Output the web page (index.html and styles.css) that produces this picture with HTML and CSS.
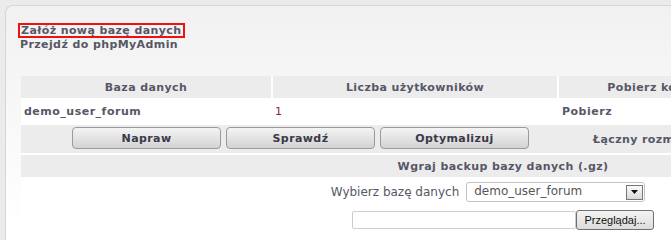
FILE: index.html
```html
<!DOCTYPE html>
<html lang="pl">
<head>
<meta charset="utf-8">
<title>Bazy danych</title>
<link rel="stylesheet" href="styles.css">
</head>
<body>
<div class="panel">
  <div class="links">
    <a class="link link-marked" href="#">Załóż nową bazę danych</a>
    <a class="link" href="#">Przejdź do phpMyAdmin</a>
  </div>

  <div class="db-table">
    <div class="row head">
      <div class="cell c1">Baza danych</div>
      <div class="cell c2">Liczba użytkowników</div>
      <div class="cell c3">Pobierz kopię</div>
      <div class="cell c4">Usuń</div>
    </div>
    <div class="row data">
      <div class="cell c1 name">demo_user_forum</div>
      <div class="cell c2 count">1</div>
      <div class="cell c3 action">Pobierz</div>
      <div class="cell c4"></div>
    </div>
    <div class="row tools">
      <div class="cell buttons">
        <button class="btn">Napraw</button>
        <button class="btn">Sprawdź</button>
        <button class="btn">Optymalizuj</button>
      </div>
      <div class="cell size">Łączny rozmiar baz danych</div>
    </div>
    <div class="row upload-head">
      <div class="cell full">Wgraj backup bazy danych (.gz)</div>
    </div>
    <div class="form-row select-row">
      <span class="label">Wybierz bazę danych</span>
      <div class="select">
        <span class="select-value">demo_user_forum</span>
        <span class="select-arrow"><svg width="7" height="4" viewBox="0 0 7 4"><path d="M0 0h7L3.5 4z" fill="#111"/></svg></span>
      </div>
    </div>
    <div class="form-row file-row">
      <span class="file-box"></span>
      <span class="file-btn">Przeglądaj...</span>
    </div>
  </div>
</div>
</body>
</html>
```

FILE: styles.css
```css
html, body {
  margin: 0;
  height: 100%;
  overflow: hidden;
  background: #ebebeb;
}

body {
  font-family: "DejaVu Sans", Verdana, sans-serif;
  font-size: 11px;
  color: #575766;
}

.panel {
  box-sizing: border-box;
  margin: 5px 0 0 5px;
  width: 1100px;
  height: 400px;
  padding: 17px 0 0 15px;
  border: 1px solid #d6d6d6;
  border-right: 0;
  border-top-left-radius: 8px;
  background: linear-gradient(#f1f1f1, #ffffff 220px);
}

.links {
  display: flex;
  flex-direction: column;
  align-items: flex-start;
}

.link {
  color: #575766;
  font-weight: bold;
  letter-spacing: 0.4px;
  text-decoration: none;
  line-height: 14px;
  margin-left: -1px;
}

.link-marked {
  line-height: 11px;
  border: 2px solid #ee1111;
  padding: 0 1px;
  margin-left: -3px;
}

.db-table {
  width: 964px;
  margin-top: 24px;
  background: #fff;
}

.row {
  display: flex;
  gap: 2px;
}

.cell {
  box-sizing: border-box;
  display: flex;
  align-items: center;
}

.head .cell {
  height: 22px;
  background: #ececec;
  justify-content: center;
  font-weight: bold;
  letter-spacing: 0.4px;
}

.c1 { width: 250px; }
.c2 { width: 284px; }
.c3 { width: 186px; }
.c4 { flex: 1; }

.data .cell {
  height: 27px;
  background: #fff;
  padding-left: 3px;
}

.name, .action {
  font-weight: bold;
  letter-spacing: 0.5px;
}

.count {
  color: #8e2038;
  padding-left: 2px !important;
}

.tools {
  gap: 0;
  background: #ececec;
  height: 28px;
}

.buttons {
  width: 559px;
  justify-content: center;
  gap: 5px;
  padding-bottom: 2px;
}

.btn {
  width: 149px;
  height: 22px;
  border: 1px solid #9a9a9a;
  border-radius: 4px;
  background: linear-gradient(#f4f4f4, #d3d3d3);
  font-family: "DejaVu Sans", Verdana, sans-serif;
  font-size: 11px;
  font-weight: bold;
  letter-spacing: 0.4px;
  color: #3a3a48;
  padding: 0;
}

.size {
  padding-left: 13px;
  font-weight: bold;
  letter-spacing: 0.4px;
}

.upload-head {
  margin-top: 2px;
}

.full {
  flex: 1;
  height: 22px;
  background: #ececec;
  justify-content: center;
  font-weight: bold;
  letter-spacing: 0.4px;
}

.form-row {
  display: flex;
  justify-content: center;
  align-items: center;
}

.select-row {
  margin-top: 5px;
  gap: 7px;
  padding-right: 30px;
  font-size: 12px;
}

.select {
  box-sizing: border-box;
  width: 179px;
  height: 20px;
  border: 1px solid #c3c3c3;
  border-radius: 3px;
  background: #fff;
  display: flex;
  align-items: center;
  justify-content: space-between;
  padding: 0 1px 0 7px;
}

.select-value {
  color: #555;
  margin-top: -3px;
}

.select-arrow {
  box-sizing: border-box;
  width: 17px;
  height: 15px;
  border: 1px solid #777;
  background: linear-gradient(#fafafa, #d9d9d9);
  display: flex;
  align-items: center;
  justify-content: center;
}

.file-row {
  margin-top: 8px;
}

.file-box {
  box-sizing: border-box;
  width: 224px;
  height: 18px;
  border: 1px solid #cdcdcd;
  border-radius: 2px;
  background: #fff;
}

.file-btn {
  box-sizing: border-box;
  width: 78px;
  height: 20px;
  border: 1px solid #707070;
  border-radius: 3px;
  background: linear-gradient(#f3f3f3, #dcdcdc);
  font-family: "Liberation Sans", Arial, sans-serif;
  font-size: 11px;
  color: #111;
  display: flex;
  align-items: center;
  justify-content: center;
}
```
